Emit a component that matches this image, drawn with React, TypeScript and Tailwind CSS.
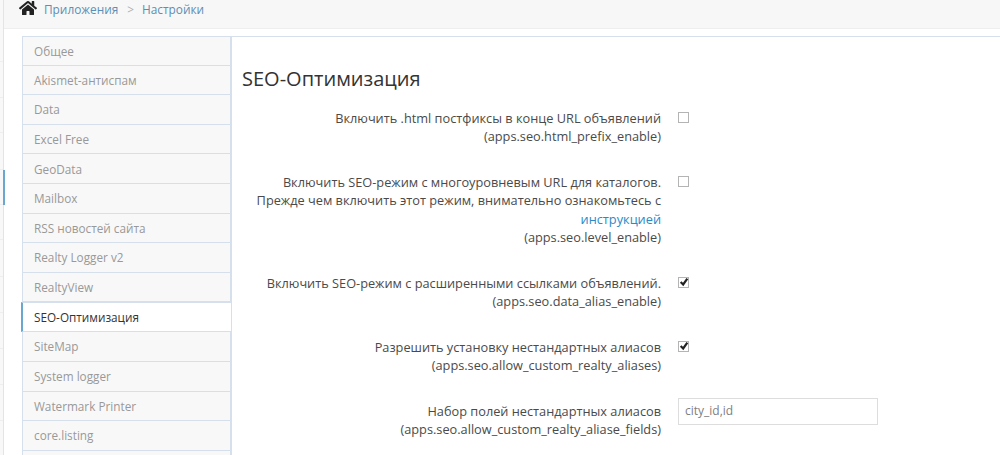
import { FaHome } from "react-icons/fa";

const tabs = [
  "Общее",
  "Akismet-антиспам",
  "Data",
  "Excel Free",
  "GeoData",
  "Mailbox",
  "RSS новостей сайта",
  "Realty Logger v2",
  "RealtyView",
  "SEO-Оптимизация",
  "SiteMap",
  "System logger",
  "Watermark Printer",
  "core.listing",
  "",
];

const railRows = [62, 36, 35, 37, 35, 35, 37, 36, 36, 36, 36];

function Box({ checked }: { checked?: boolean }) {
  return (
    <span className="mt-[3px] flex h-[11px] w-[11px] items-center justify-center border-[1.5px] border-[#b4b4b4] bg-white">
      {checked && (
        <svg viewBox="0 0 12 12" className="h-[10px] w-[10px] shrink-0 text-[#222222]">
          <path d="M2 6l3 3 5-7" fill="none" stroke="currentColor" strokeWidth="2.6" />
        </svg>
      )}
    </span>
  );
}

export default function App() {
  return (
    <div className="flex h-[455px] w-[1000px] overflow-hidden bg-white font-['Open_Sans',sans-serif] text-[12.75px] leading-[18.3px] text-[#4a4a4a]">
      {/* Left rail */}
      <div className="relative w-[4px] shrink-0 border-r border-[#e4e4e4] bg-[#f8f8f8]">
        {railRows.map((h, i) => (
          <div key={i} className="border-b border-[#eeeeee]" style={{ height: h }} />
        ))}
        <div className="absolute left-[3px] top-[170px] h-[35px] w-[2px] bg-[#6aa7d0]" />
      </div>

      <div className="flex-1">
        {/* Breadcrumb */}
        <div className="box-border flex h-[29px] border-b border-[#eeeeee] bg-[#f7f7f7] pl-[15px] text-[11.85px] leading-[18px] text-[#5c8fb5]">
          <FaHome className="h-[16px] w-[18px] text-[#222222]" />
          <span className="ml-[7px]">Приложения</span>
          <span className="ml-[9px] mr-[8px] text-[#b0b0b0]">&gt;</span>
          <span>Настройки</span>
        </div>

        <div className="flex pt-[7px]">
          {/* Tabs */}
          <div className="ml-[18px] w-[209px] shrink-0 text-[11.75px]">
            {tabs.map((t) =>
              t === "SEO-Оптимизация" ? (
                <div
                  key={t}
                  className="-ml-[1px] -mr-[1px] box-border flex h-[30px] items-center border-y border-l-2 border-[#d5e0ec] border-l-[#6aa7d0] bg-white pl-[11px] text-[#333333]"
                >
                  {t}
                </div>
              ) : (
                <div
                  key={t}
                  className="box-border flex h-[29.6px] items-center border-x border-b border-[#d5e0ec] bg-[#f8f8f8] pl-[11px] text-[#999999] first:border-t"
                >
                  {t}
                </div>
              )
            )}
          </div>

          {/* Content */}
          <div className="flex-1 border-t border-l border-[#d5e0ec] pl-[10px]">
            <h1 className="mt-[28px] text-[20px] leading-[28px] text-[#333333]">SEO-Оптимизация</h1>

            <div className="mt-[16px] flex flex-col gap-[27.4px]">
              <div className="flex">
                <div className="w-[419px] text-right">
                  Включить .html постфиксы в конце URL объявлений
                  <br />
                  (apps.seo.html_prefix_enable)
                </div>
                <div className="ml-[17px]"><Box /></div>
              </div>
              <div className="flex">
                <div className="w-[419px] text-right">
                  Включить SEO-режим с многоуровневым URL для каталогов.
                  <br />
                  Прежде чем включить этот режим, внимательно ознакомьтесь с
                  <br />
                  <span className="text-[#2a8ac7]">инструкцией</span>
                  <br />
                  (apps.seo.level_enable)
                </div>
                <div className="ml-[17px]"><Box /></div>
              </div>
              <div className="flex">
                <div className="w-[419px] text-right">
                  Включить SEO-режим с расширенными ссылками объявлений.
                  <br />
                  (apps.seo.data_alias_enable)
                </div>
                <div className="ml-[17px]"><Box checked /></div>
              </div>
              <div className="flex">
                <div className="w-[419px] text-right">
                  Разрешить установку нестандартных алиасов
                  <br />
                  (apps.seo.allow_custom_realty_aliases)
                </div>
                <div className="ml-[17px]"><Box checked /></div>
              </div>
              <div className="flex">
                <div className="w-[419px] text-right">
                  Набор полей нестандартных алиасов
                  <br />
                  (apps.seo.allow_custom_realty_aliase_fields)
                </div>
                <div className="ml-[17px] -mt-[4px] box-border flex h-[27px] w-[200px] items-center border border-[#dddddd] bg-white px-[6px] text-[12px] text-[#808080]">
                  city_id,id
                </div>
              </div>
            </div>
          </div>
        </div>
      </div>
    </div>
  );
}
